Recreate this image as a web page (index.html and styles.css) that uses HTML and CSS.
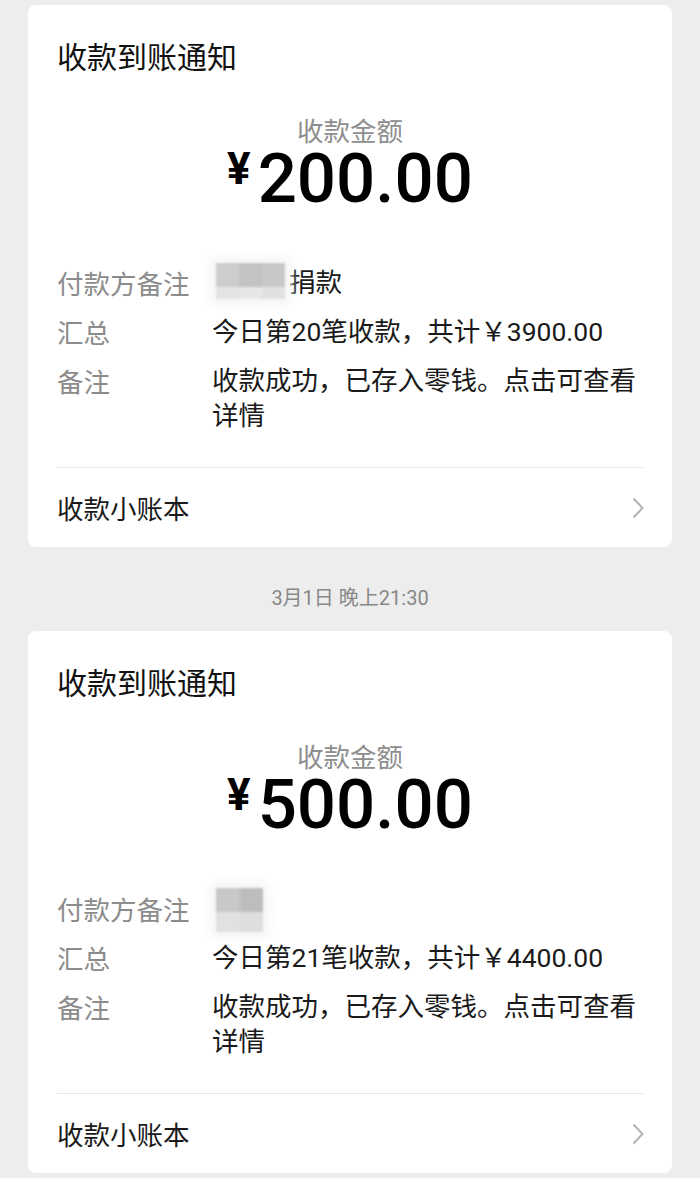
FILE: index.html
```html
<!DOCTYPE html>
<html lang="zh-CN">
<head>
<meta charset="utf-8">
<title>收款到账通知</title>
<link rel="stylesheet" href="styles.css">
</head>
<body>
<div class="page">
  <section class="card">
    <h2 class="title">收款到账通知</h2>
    <div class="amount-label">收款金额</div>
    <div class="amount"><span class="yen">¥</span><span class="num">200.00</span></div>
    <dl class="rows">
      <div class="row">
        <dt>付款方备注</dt>
        <dd><span class="mosaic m1"><i class="c1"></i><i class="c2"></i><i class="c3"></i><i class="c4"></i><i class="c5"></i><i class="c6"></i></span>捐款</dd>
      </div>
      <div class="row">
        <dt>汇总</dt>
        <dd>今日第20笔收款，共计￥3900.00</dd>
      </div>
      <div class="row">
        <dt>备注</dt>
        <dd>收款成功，已存入零钱。点击可查看详情</dd>
      </div>
    </dl>
    <div class="divider"></div>
    <div class="footer">
      <span>收款小账本</span>
      <svg class="chev" width="12" height="22" viewBox="0 0 12 22"><polyline points="1.5,1.5 10.5,11 1.5,20.5" fill="none" stroke="#b3b3b3" stroke-width="2" stroke-linejoin="miter"/></svg>
    </div>
  </section>

  <div class="time">3月1日 晚上21:30</div>

  <section class="card">
    <h2 class="title">收款到账通知</h2>
    <div class="amount-label">收款金额</div>
    <div class="amount"><span class="yen">¥</span><span class="num">500.00</span></div>
    <dl class="rows">
      <div class="row">
        <dt>付款方备注</dt>
        <dd><span class="mosaic m2"><i class="d1"></i><i class="d2"></i><i class="d3"></i><i class="d4"></i></span></dd>
      </div>
      <div class="row">
        <dt>汇总</dt>
        <dd>今日第21笔收款，共计￥4400.00</dd>
      </div>
      <div class="row">
        <dt>备注</dt>
        <dd>收款成功，已存入零钱。点击可查看详情</dd>
      </div>
    </dl>
    <div class="divider"></div>
    <div class="footer">
      <span>收款小账本</span>
      <svg class="chev" width="12" height="22" viewBox="0 0 12 22"><polyline points="1.5,1.5 10.5,11 1.5,20.5" fill="none" stroke="#b3b3b3" stroke-width="2" stroke-linejoin="miter"/></svg>
    </div>
  </section>
</div>
</body>
</html>
```

FILE: styles.css
```css
html, body {
  margin: 0;
  padding: 0;
  background: #ededed;
}
body {
  font-family: Roboto, "Noto Sans CJK SC", sans-serif;
  color: #1a1a1a;
}
.page {
  padding: 5px 28px 0;
}
.card {
  background: #fff;
  border-radius: 8px;
  padding: 32px 29px 21px;
}
.title {
  margin: 0;
  font-family: "Noto Sans CJK SC", sans-serif;
  font-weight: 400;
  font-size: 30px;
  line-height: 36px;
  color: #111;
}
.amount-label {
  margin-top: 42px;
  text-align: center;
  font-family: "Noto Sans CJK SC", sans-serif;
  font-size: 26.5px;
  line-height: 30px;
  color: #8e8e8e;
}
.amount {
  display: flex;
  justify-content: center;
  align-items: flex-start;
  gap: 7px;
  color: #000;
  font-family: Roboto, sans-serif;
  font-weight: 500;
}
.yen {
  font-size: 44px;
  line-height: 44px;
  margin-top: 2px;
  font-weight: 700;
}
.num {
  font-size: 69px;
  line-height: 68px;
}
.rows {
  margin: 52px 0 0;
  display: flex;
  flex-direction: column;
  gap: 14px;
  font-size: 26.5px;
  line-height: 35px;
}
.row {
  display: flex;
}
.row dt {
  width: 155px;
  flex: none;
  color: #8c8c8c;
  font-family: "Noto Sans CJK SC", sans-serif;
}
.row dd {
  margin: 0;
  flex: 1;
  color: #1a1a1a;
}
.mosaic {
  display: inline-grid;
  vertical-align: top;
  filter: blur(0.9px);
  box-shadow: 0 0 9px 6px #f6f6f6;
}
.mosaic i {
  display: block;
}
.m1 {
  margin: -2px 4px 1px 4px;
  grid-template-columns: 23px 23px 23px;
  grid-template-rows: 24px 12px;
}
.c1 { background: #cdcdcd; }
.c2 { background: #c3c3c3; }
.c3 { background: #c8c8c8; }
.c4 { background: #e4e4e4; }
.c5 { background: #e7e7e7; }
.c6 { background: #e1e1e1; }
.m2 {
  margin: -3px 0 -6px 4px;
  grid-template-columns: 24px 23px;
  grid-template-rows: 24px 20px;
}
.d1 { background: #c8c8c8; }
.d2 { background: #bdbdbd; }
.d3 { background: #e1e1e1; }
.d4 { background: #dedede; }
.divider {
  margin-top: 34px;
  height: 1px;
  background: #e6e6e6;
}
.footer {
  margin-top: 22px;
  display: flex;
  justify-content: space-between;
  align-items: center;
  font-family: "Noto Sans CJK SC", sans-serif;
  font-size: 26.5px;
  line-height: 36px;
  color: #1a1a1a;
}
.chev {
  display: block;
  margin-right: -1px;
}
.time {
  margin: 38px 0 20px;
  text-align: center;
  font-family: Roboto, "Noto Sans CJK SC", sans-serif;
  font-size: 20px;
  line-height: 26px;
  color: #888;
}
```
